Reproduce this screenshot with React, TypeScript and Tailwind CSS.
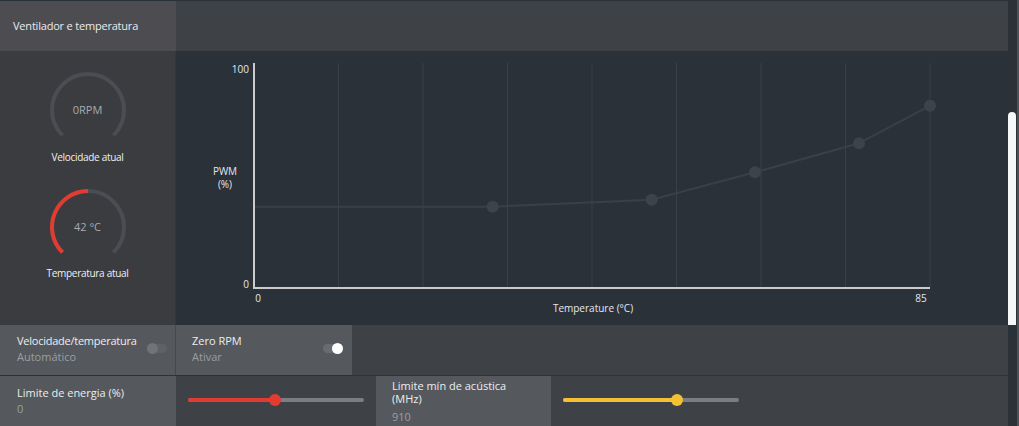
import React from "react";

const font = { fontFamily: '"Open Sans", "Noto Sans", sans-serif' };

function Gauge({ value, pct }: { value: string; pct: number }) {
  const r = 36;
  const cx = 40;
  const cy = 40;
  const start = (135 * Math.PI) / 180;
  const sx = cx + r * Math.cos(start);
  const sy = cy + r * Math.sin(start);
  const ex = cx + r * Math.cos(Math.PI / 4);
  const ey = cy + r * Math.sin(Math.PI / 4);
  const endAng = start + (pct * 270 * Math.PI) / 180;
  const px = cx + r * Math.cos(endAng);
  const py = cy + r * Math.sin(endAng);
  const large = pct * 270 > 180 ? 1 : 0;
  return (
    <div className="relative w-[80px] h-[80px]">
      <svg width="80" height="80" viewBox="0 0 80 80">
        <path d={`M ${sx} ${sy} A ${r} ${r} 0 1 1 ${ex} ${ey}`} fill="none" stroke="#4a4d52" strokeWidth="4" />
        {pct > 0 && (
          <path d={`M ${sx} ${sy} A ${r} ${r} 0 ${large} 1 ${px} ${py}`} fill="none" stroke="#e23b32" strokeWidth="4" />
        )}
      </svg>
      <div className="absolute inset-0 flex items-center justify-center text-[11px] text-[#a7abb0]">{value}</div>
    </div>
  );
}

function Toggle({ on }: { on: boolean }) {
  return (
    <div className="relative w-[20px] h-[11px]">
      <div className={`absolute left-0 right-0 top-[1px] h-[9px] rounded-full ${on ? "bg-[#686b6f]" : "bg-[#5e6165]"}`} />
      <div
        className={`absolute top-0 w-[11px] h-[11px] rounded-full ${on ? "right-0 bg-white" : "left-0 bg-[#707377]"}`}
      />
    </div>
  );
}

function Slider({ pct, color }: { pct: number; color: string }) {
  return (
    <div className="relative w-full h-[12px] flex items-center">
      <div className="absolute left-0 right-0 h-[4px] rounded-full bg-[#7b7d81]" />
      <div className="absolute left-0 h-[4px] rounded-full" style={{ width: `${pct}%`, background: color }} />
      <div
        className="absolute w-[12px] h-[12px] rounded-full -ml-[6px]"
        style={{ left: `${pct}%`, background: color }}
      />
    </div>
  );
}

function Chart() {
  const x0 = 78;
  const x1 = 754;
  const yTop = 12;
  const yBot = 237;
  const grid = Array.from({ length: 8 }, (_, i) => x0 + (i + 1) * 84.5);
  const pts: [number, number][] = [
    [316.7, 155.7],
    [475.7, 148.7],
    [579, 121.3],
    [683, 92.3],
    [754, 54.7],
  ];
  const line = [[x0 + 1, 155.7] as [number, number], ...pts].map((p) => p.join(",")).join(" ");
  return (
    <svg width="832" height="274" viewBox="0 0 832 274" className="block">
      {grid.map((gx) => (
        <line key={gx} x1={gx} y1={yTop} x2={gx} y2={yBot} stroke="#394048" strokeWidth="1" />
      ))}
      <polyline points={line} fill="none" stroke="#394048" strokeWidth="2" />
      {pts.map(([px, py]) => (
        <circle key={px} cx={px} cy={py} r="6" fill="#3d434a" />
      ))}
      <line x1={x0} y1={yTop} x2={x0} y2={yBot + 1} stroke="#cbcbcb" strokeWidth="2" />
      <line x1={x0 - 1} y1={yBot} x2={x1} y2={yBot} stroke="#cbcbcb" strokeWidth="2" />
      <g fontSize="10" fill="#e4e8ee" style={font}>
        <text x="73" y="22" textAnchor="end">100</text>
        <text x="73" y="237" textAnchor="end">0</text>
        <text x="82" y="251" textAnchor="middle">0</text>
        <text x="745" y="251" textAnchor="middle">85</text>
        <text x="417" y="261" textAnchor="middle">Temperature (°C)</text>
        <text x="49" y="124" textAnchor="middle">PWM</text>
        <text x="49" y="137" textAnchor="middle">(%)</text>
      </g>
    </svg>
  );
}

export default function App() {
  return (
    <div className="w-[1019px] h-[426px] bg-[#2b3138] flex overflow-hidden" style={font}>
      <div className="w-[1008px] flex flex-col">
        <div className="h-[1px]" />
        <div className="h-[50px] flex bg-[#3e4146]">
          <div className="w-[176px] bg-[#4c4c51] flex items-center pl-[13px] text-[11px] tracking-[-0.2px] text-[#e9ebee]">
            Ventilador e temperatura
          </div>
        </div>
        <div className="h-[274px] flex">
          <div className="w-[176px] bg-[#3b3c40] border-r border-[#35373b] flex flex-col items-center pt-[19px]">
            <Gauge value="0RPM" pct={0} />
            <div className="text-[10px] leading-[14px] tracking-[-0.3px] text-[#eef0f2] mt-[0px]">Velocidade atual</div>
            <div className="mt-[23px]">
              <Gauge value="42 °C" pct={0.5} />
            </div>
            <div className="text-[10px] leading-[14px] tracking-[-0.3px] text-[#eef0f2] -mt-[1px]">Temperatura atual</div>
          </div>
          <div className="flex-1 bg-[#2b3139]">
            <Chart />
          </div>
        </div>
        <div className="h-[50px] flex bg-[#3e4146]">
          <div className="w-[176px] bg-[#55585c] border-r border-[#45484c] flex items-start pl-[17px] pr-[8px] pt-[8px]">
            <div className="flex-1 leading-[16px]">
              <div className="text-[11px] tracking-[-0.25px] text-[#eceef0]">Velocidade/temperatura</div>
              <div className="text-[11px] text-[#9b9ea3]">Automático</div>
            </div>
            <div className="mt-[10px]">
              <Toggle on={false} />
            </div>
          </div>
          <div className="w-[176px] bg-[#55585c] flex items-start pl-[16px] pr-[9px] pt-[8px]">
            <div className="flex-1 leading-[16px]">
              <div className="text-[11px] text-[#eceef0]">Zero RPM</div>
              <div className="text-[11px] text-[#9b9ea3]">Ativar</div>
            </div>
            <div className="mt-[10px]">
              <Toggle on={true} />
            </div>
          </div>
        </div>
        <div className="h-[1px] bg-[#2e3237]" />
        <div className="h-[50px] flex bg-[#3e4146]">
          <div className="w-[176px] bg-[#55585c] pl-[17px] pt-[9px] leading-[16px]">
            <div className="text-[11px] text-[#eceef0]">Limite de energia (%)</div>
            <div className="text-[11px] text-[#9b9ea3]">0</div>
          </div>
          <div className="w-[200px] px-[12px] flex items-center -mt-[2px]">
            <Slider pct={49.5} color="#e23b32" />
          </div>
          <div className="w-[175px] bg-[#55585c] pl-[16px] pt-[3px]">
            <div className="text-[11px] leading-[13px] text-[#eceef0]">
              Limite mín de acústica
              <br />
              (MHz)
            </div>
            <div className="text-[11px] leading-[16px] mt-[4px] text-[#9b9ea3]">910</div>
          </div>
          <div className="w-[200px] px-[12px] flex items-center -mt-[2px]">
            <Slider pct={65} color="#f4c135" />
          </div>
        </div>
      </div>
      <div className="w-[11px] relative flex">
        <div className="w-[8px] relative">
          <div className="absolute left-0 right-0 top-[112px] h-[213px] rounded-t-full bg-[#f6f7f8]" />
        </div>
        <div className="flex-1" />
        <div className="w-[2px] bg-[#4b5157]" />
      </div>
    </div>
  );
}
